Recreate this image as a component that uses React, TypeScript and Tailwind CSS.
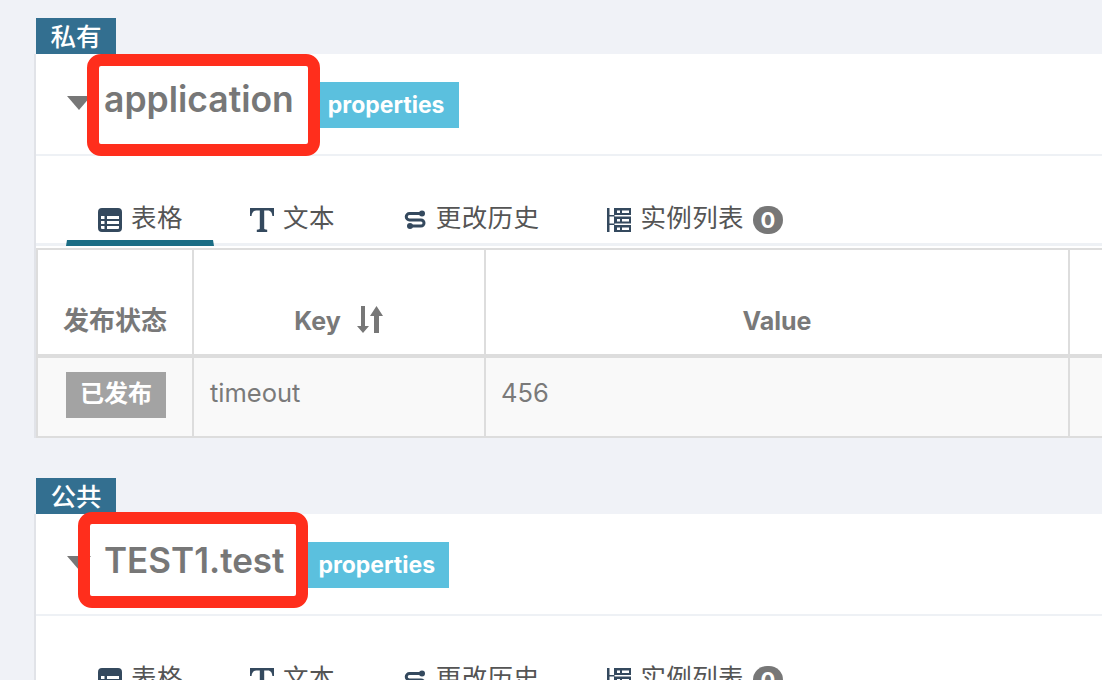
const latin = "font-['Inter','Noto_Sans_CJK_SC',sans-serif]";

function TableIcon() {
  return (
    <svg width="24" height="24" viewBox="0 0 24 24" className="text-[#34495e]">
      <path
        fill="currentColor"
        fillRule="evenodd"
        d="M4 0h16a4 4 0 0 1 4 4v16a4 4 0 0 1-4 4H4a4 4 0 0 1-4-4V4a4 4 0 0 1 4-4zM3 8v3h3.500V8H3zm6 0v3h12V8H9zm-6 5v3h3.500v-3H3zm6 0v3h12v-3H9zm-6 5v2a1 1 0 0 0 1 1h2.500v-3H3zm6 0v3h11a1 1 0 0 0 1-1v-2H9z"
      />
    </svg>
  );
}

function TextIcon() {
  return (
    <svg width="24" height="24" viewBox="0 0 24 24" className="text-[#34495e]">
      <path fill="currentColor" d="M0 0h24v8h-1.600c-.4-3-1.600-5.400-4.600-5.400H14.200v18c0 .8.8 1 3 1.200V24H6.800v-2.200c2.200-.2 3-.4 3-1.200v-18H6.200C3.200 2.600 2 5 1.600 8H0z" />
    </svg>
  );
}

function RouteIcon() {
  return (
    <svg width="24" height="24" viewBox="0 0 24 24" className="text-[#34495e]" fill="none">
      <path d="M19 5.500H6.500a3.250 3.250 0 0 0 0 6.500H18a3 3 0 0 1 0 6H7" stroke="currentColor" strokeWidth="3" />
      <circle cx="19" cy="5.500" r="3" fill="currentColor" />
      <circle cx="7" cy="18" r="3" fill="currentColor" />
    </svg>
  );
}

function ListIcon() {
  return (
    <svg width="24" height="24" viewBox="0 0 24 24" className="text-[#34495e]">
      <path
        fill="currentColor"
        fillRule="evenodd"
        d="M0 0h2.500v7h5v1.500h-5V15.500h5V17h-5v7H0V0zM7 0h17v7H7V0zm3 2.500V5h3V2.500h-3zm5 0V5h7V2.500h-7zM7 8.500h17v7H7v-7zm3 2.500v2.500h3V11h-3zm5 0v2.500h7V11h-7zM7 17h17v7H7v-7zm3 2.500V22h3v-2.500h-3zm5 0V22h7v-2.500h-7z"
      />
    </svg>
  );
}

function Tab({
  icon,
  label,
  active,
  badge,
  className,
}: {
  icon: React.ReactNode;
  label: string;
  active?: boolean;
  badge?: string;
  className?: string;
}) {
  return (
    <div
      className={`relative flex h-[49px] items-start pt-[3px] text-[25.500px] leading-[36px] text-[#555] ${className ?? ''}`}
    >
      <span className="mt-[8px] mr-[9px]">{icon}</span>
      <span className="tracking-[0.400px]">{label}</span>
      {badge && (
        <span className="mt-[6px] ml-[9px] flex h-[28px] w-[30px] items-center justify-center rounded-full bg-[#777] text-[22px] font-bold text-white">
          {badge}
        </span>
      )}
      {active && (
        <span className="absolute right-0 bottom-0 left-0 h-[6px] bg-[#1b6d85] [clip-path:polygon(1px_0,calc(100%-1px)_0,100%_100%,0_100%)]" />
      )}
    </div>
  );
}

function PanelHead({ title, gap, size }: { title: string; gap: string; size: string }) {
  return (
    <div className="flex h-[102px] items-center border-b-2 border-[#eef1f5] pl-[31px]">
      <svg width="24" height="14" viewBox="0 0 24 14" className="mt-[-2px] mr-[13px] text-[#777]">
        <path fill="currentColor" d="M0 0h24L12 14z" />
      </svg>
      <h2 className={`mt-[-8px] leading-[40px] font-semibold text-[#777] ${size} ${gap}`}>{title}</h2>
      <span className="mt-[2px] flex h-[46px] items-center bg-[#5bc0de] px-[14px] text-[23px] font-bold text-white">
        properties
      </span>
    </div>
  );
}

function Tabs() {
  return (
    <div className="mt-[-2px] border-b-[3px] border-[#eef1f5] pt-[43px]">
      <div className="mb-[-3px] flex pl-[30px]">
        <Tab icon={<TableIcon />} label="表格" active className="w-[148px] pl-[32px]" />
        <Tab icon={<TextIcon />} label="文本" className="ml-[36px]" />
        <Tab icon={<RouteIcon />} label="更改历史" className="ml-[68px]" />
        <Tab icon={<ListIcon />} label="实例列表" badge="0" className="ml-[68px]" />
      </div>
    </div>
  );
}

function ConfigTable() {
  const cols = 'grid grid-cols-[156px_292px_584px_200px]';
  const head = 'flex h-[104px] items-end justify-center border-r-2 border-[#ddd] pb-[15px] leading-[36px] font-bold text-[#797979]';
  const cell = 'flex h-[78px] items-center border-r-2 border-[#ddd] text-[25.500px] text-[#7a7a7a]';
  return (
    <div className="mt-[2px] w-[1300px] border-y-2 border-l-2 border-[#ddd]">
      <div className={`${cols} border-b-4 border-[#ddd] bg-white`}>
        <div className={`${head} text-[26px]`}>发布状态</div>
        <div className={`${head} text-[25px]`}>
          Key
          <svg width="28" height="28" viewBox="0 0 28 28" className="mb-[5px] ml-[15px] text-[#777]">
            <path fill="currentColor" d="M5 0h4v20h4l-6 7-6-7h4zM18 27h5V10h4L20.500 0 14 10h4z" />
          </svg>
        </div>
        <div className={`${head} text-[25px]`}>Value</div>
        <div className={head} />
      </div>
      <div className={`${cols} bg-[#f9f9f9]`}>
        <div className={`${cell} justify-center pb-[4px] pl-[2px]`}>
          <span className="flex h-[46px] w-[100px] items-center justify-center bg-[#a3a3a3] pb-[2px] text-[24px] font-bold text-white">
            已发布
          </span>
        </div>
        <div className={`${cell} pb-[8px] pl-[16px]`}>timeout</div>
        <div className={`${cell} pb-[8px] pl-[15px]`}>456</div>
        <div className={cell} />
      </div>
    </div>
  );
}

function Section({
  scope,
  title,
  gap,
  size,
  children,
}: {
  scope: string;
  title: string;
  gap: string;
  size: string;
  children?: React.ReactNode;
}) {
  return (
    <section className="relative">
      <div className="ml-[2px] flex h-[36px] w-[80px] items-center justify-center bg-[#336f90] pt-[3px] text-[25.500px] font-medium text-white">
        {scope}
      </div>
      <div className="border-l-2 border-[#e1e3e8] bg-white">
        <PanelHead title={title} gap={gap} size={size} />
        <Tabs />
        <ConfigTable />
      </div>
      {children}
    </section>
  );
}

export default function App() {
  return (
    <div className={`${latin} h-[680px] w-full overflow-hidden bg-[#f0f2f7] pt-[18px] pl-[34px]`}>
      <Section scope="私有" title="application" gap="mr-[20px]" size="text-[35.500px]">
        <div className="absolute top-[36px] left-[53px] h-[102px] w-[233px] rounded-[14px] border-[12px] border-[#ff2e1c]" />
      </Section>
      <div className="h-[40px]" />
      <Section scope="公共" title="TEST1.test" gap="mr-[20px]" size="text-[35px]">
        <div className="absolute top-[34px] left-[44px] h-[96px] w-[230px] rounded-[14px] border-[12px] border-[#ff2e1c]" />
      </Section>
    </div>
  );
}
